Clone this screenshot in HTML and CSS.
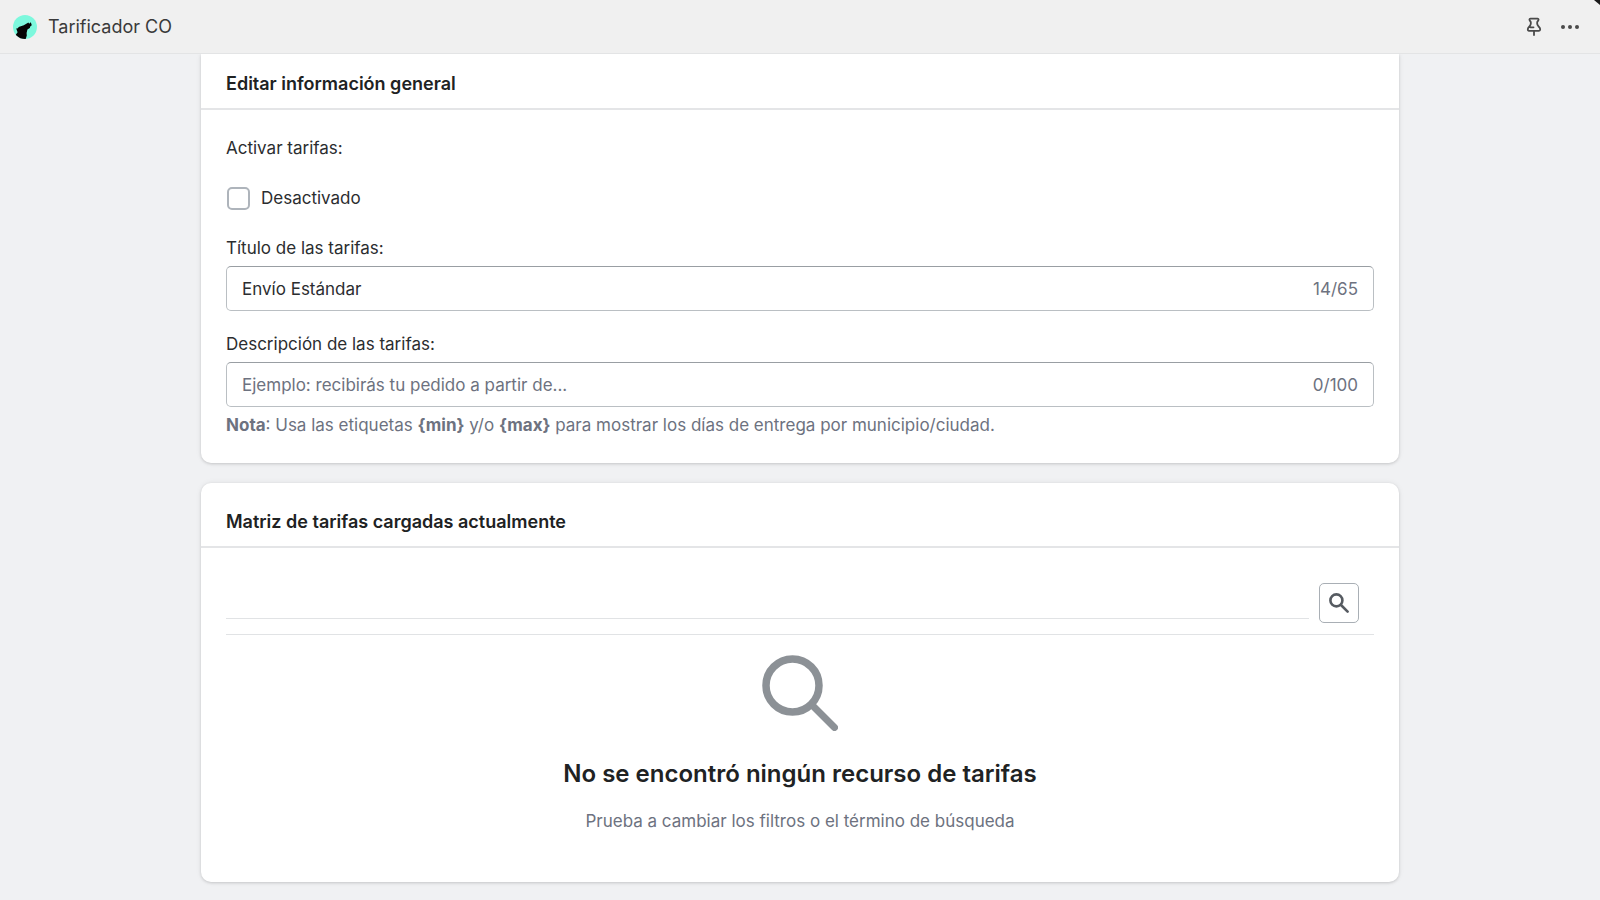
FILE: index.html
```html
<!DOCTYPE html>
<html lang="es">
<head>
<meta charset="utf-8">
<title>Tarificador CO</title>
<link rel="stylesheet" href="styles.css">
</head>
<body>
<header class="topbar">
  <div class="brand">
    <svg class="brand-logo" viewBox="0 0 24 24" aria-hidden="true">
      <defs><clipPath id="disc"><circle cx="12" cy="12" r="12"/></clipPath></defs>
      <circle cx="12" cy="12" r="12" fill="#7df8dd"/>
      <path clip-path="url(#disc)" d="M2.6 20 4.6 17.2 3.2 13.6 5 13.2 5.6 12 10.8 10.2 15.4 7.6 16.2 8.8 17.8 7.2 18.8 10.2 17.4 11.2 16.8 13 14.4 14.4 13.6 18 13.8 20.4 12.4 25 8 25 3 22Z" fill="#050505"/>
    </svg>
    <span class="brand-name">Tarificador CO</span>
  </div>
  <div class="actions">
    <button class="icon-button" type="button" aria-label="Fijar">
      <svg viewBox="0 0 20 20" width="20" height="20" fill="none" stroke="#4a4a4a" stroke-width="1.8" stroke-linejoin="round" stroke-linecap="round" aria-hidden="true">
        <path d="M6.4 1.7h7.2c1.2 0 1.2 1.4.5 2-.8.7-1 1.200-1 2.300 0 1.600.4 2.500 1.500 3.500 1 .9 1.600 1.600 1.600 2.800 0 1-.4 1.500-1.200 1.500H5c-.8 0-1.200-.5-1.200-1.500 0-1.200.6-1.900 1.600-2.800C6.500 8.500 6.900 7.600 6.900 6c0-1.100-.2-1.600-1-2.300-.7-.6-.7-2 .5-2ZM6.500 10.300h3M10 13.800v4.200"/>
      </svg>
    </button>
    <button class="icon-button" type="button" aria-label="Más opciones">
      <svg viewBox="0 0 20 20" width="20" height="20" fill="#4a4a4a" aria-hidden="true">
        <circle cx="3" cy="10" r="2"/><circle cx="10" cy="10" r="2"/><circle cx="17" cy="10" r="2"/>
      </svg>
    </button>
  </div>
  <span class="corner"></span>
</header>

<main class="page">
  <section class="card card-first">
    <h2 class="card-header">Editar información general</h2>
    <div class="card-body form">
      <p class="text">Activar tarifas:</p>
      <label class="choice"><input class="checkbox" type="checkbox">Desactivado</label>
      <div class="field">
        <label for="title">Título de las tarifas:</label>
        <div class="text-field">
          <input id="title" type="text" maxlength="65" value="Envío Estándar">
          <span class="count">14/65</span>
        </div>
      </div>
      <div class="field">
        <label for="description">Descripción de las tarifas:</label>
        <div class="text-field">
          <input id="description" type="text" maxlength="100" placeholder="Ejemplo: recibirás tu pedido a partir de...">
          <span class="count">0/100</span>
        </div>
        <p class="help"><strong>Nota</strong>: Usa las etiquetas <strong>{min}</strong> y/o <strong>{max}</strong> para mostrar los días de entrega por municipio/ciudad.</p>
      </div>
    </div>
  </section>

  <section class="card">
    <h2 class="card-header">Matriz de tarifas cargadas actualmente</h2>
    <div class="card-body">
      <div class="filters">
        <div class="tabs"></div>
        <button class="search-button" type="button" aria-label="Buscar">
          <svg viewBox="0 0 20 20" width="20" height="20" fill="none" stroke="#565b61" stroke-width="2.6" stroke-linecap="round" aria-hidden="true">
            <circle cx="7.4" cy="7.4" r="6"/><path d="m12 12 6.6 6.6"/>
          </svg>
        </button>
      </div>
      <div class="empty">
        <svg class="empty-icon" viewBox="0 0 76 76" fill="none" stroke="#8c9196" aria-hidden="true">
          <circle cx="30.5" cy="30.5" r="26.5" stroke-width="7.5"/><path d="m51 51 21.5 21.5" stroke-width="7" stroke-linecap="round"/>
        </svg>
        <p class="empty-title">No se encontró ningún recurso de tarifas</p>
        <p class="empty-text">Prueba a cambiar los filtros o el término de búsqueda</p>
      </div>
    </div>
  </section>
</main>
</body>
</html>
```
FILE: styles.css
```css
* { box-sizing: border-box; }

body {
  margin: 0;
  background: #f0f1f3;
  color: #2b2d2f;
  font: 400 17px/26px Inter, "Liberation Sans", sans-serif;
}

h2, p { margin: 0; }

button, input { font: inherit; color: inherit; }

.topbar {
  position: relative;
  display: flex;
  align-items: center;
  justify-content: space-between;
  height: 54px;
  padding: 0 20px 0 13px;
  background: #f0f0f0;
  border-bottom: 1px solid #e3e4e5;
}

.brand { display: flex; align-items: center; gap: 11px; color: #3a3a3a; font-size: 18px; }
.brand-logo { width: 24px; height: 24px; }
.actions { display: flex; gap: 16px; }

.icon-button {
  display: flex;
  padding: 0;
  border: 0;
  background: none;
}

.corner {
  position: absolute;
  top: 0;
  right: 0;
  width: 6px;
  height: 5px;
  background: #1a1a1a;
  clip-path: polygon(0 0, 100% 0, 100% 100%);
}

.page {
  display: flex;
  flex-direction: column;
  gap: 20px;
  max-width: 1198px;
  margin: 0 auto;
  padding-bottom: 18px;
}

.card {
  background: #fff;
  border-radius: 10px;
  box-shadow: 0 0 6px rgba(23, 24, 24, 0.06), 0 1px 3px rgba(0, 0, 0, 0.15);
}

.card-first { border-radius: 0 0 10px 10px; clip-path: inset(0 -10px -10px); }

.card-header {
  padding: 26px 25px 12px;
  border-bottom: 2px solid #e4e5e7;
  color: #202223;
  font-size: 18px;
  font-weight: 600;
  line-height: 25px;
}

.card-first .card-header { padding-top: 17px; }

.card-body { padding: 25px; }
.form { display: flex; flex-direction: column; gap: 24px; }

.choice { display: flex; align-items: center; gap: 11px; }

.checkbox {
  appearance: none;
  width: 23px;
  height: 23px;
  margin: 0 0 0 1px;
  border: 2px solid #aeb4bb;
  border-radius: 5px;
  background: #fff;
}

.checkbox:checked { background: #2c6ecb; }

.field { display: flex; flex-direction: column; gap: 5px; }
.field + .field { margin-top: -4px; }

.text-field {
  display: flex;
  align-items: center;
  height: 45px;
  padding: 0 15px;
  border: 1px solid #babfc3;
  border-top-color: #999ea3;
  border-radius: 5px;
}

.text-field input {
  flex: 1;
  min-width: 0;
  padding: 0;
  border: 0;
  outline: 0;
  background: none;
}

.text-field input::placeholder { color: #6d7280; opacity: 1; }
.count, .help, .empty-text { color: #6d7280; }
strong { font-weight: 700; }

.filters {
  display: flex;
  align-items: flex-start;
  gap: 10px;
  padding: 10px 15px 11px 0;
  border-bottom: 1px solid #e1e3e5;
}

.tabs { flex: 1; height: 36px; border-bottom: 1px solid #e1e3e5; }

.search-button {
  display: flex;
  align-items: center;
  justify-content: center;
  width: 40px;
  height: 40px;
  padding: 0;
  border: 1px solid #a9afb5;
  border-radius: 5px;
  background: #fff;
}

.empty {
  display: flex;
  flex-direction: column;
  align-items: center;
  padding: 20px 0 23px;
  text-align: center;
}

.empty-icon { width: 76px; height: 76px; }
.empty-title { margin: 25px 0 17px; color: #202223; font-size: 24px; font-weight: 600; line-height: 35px; }
```
